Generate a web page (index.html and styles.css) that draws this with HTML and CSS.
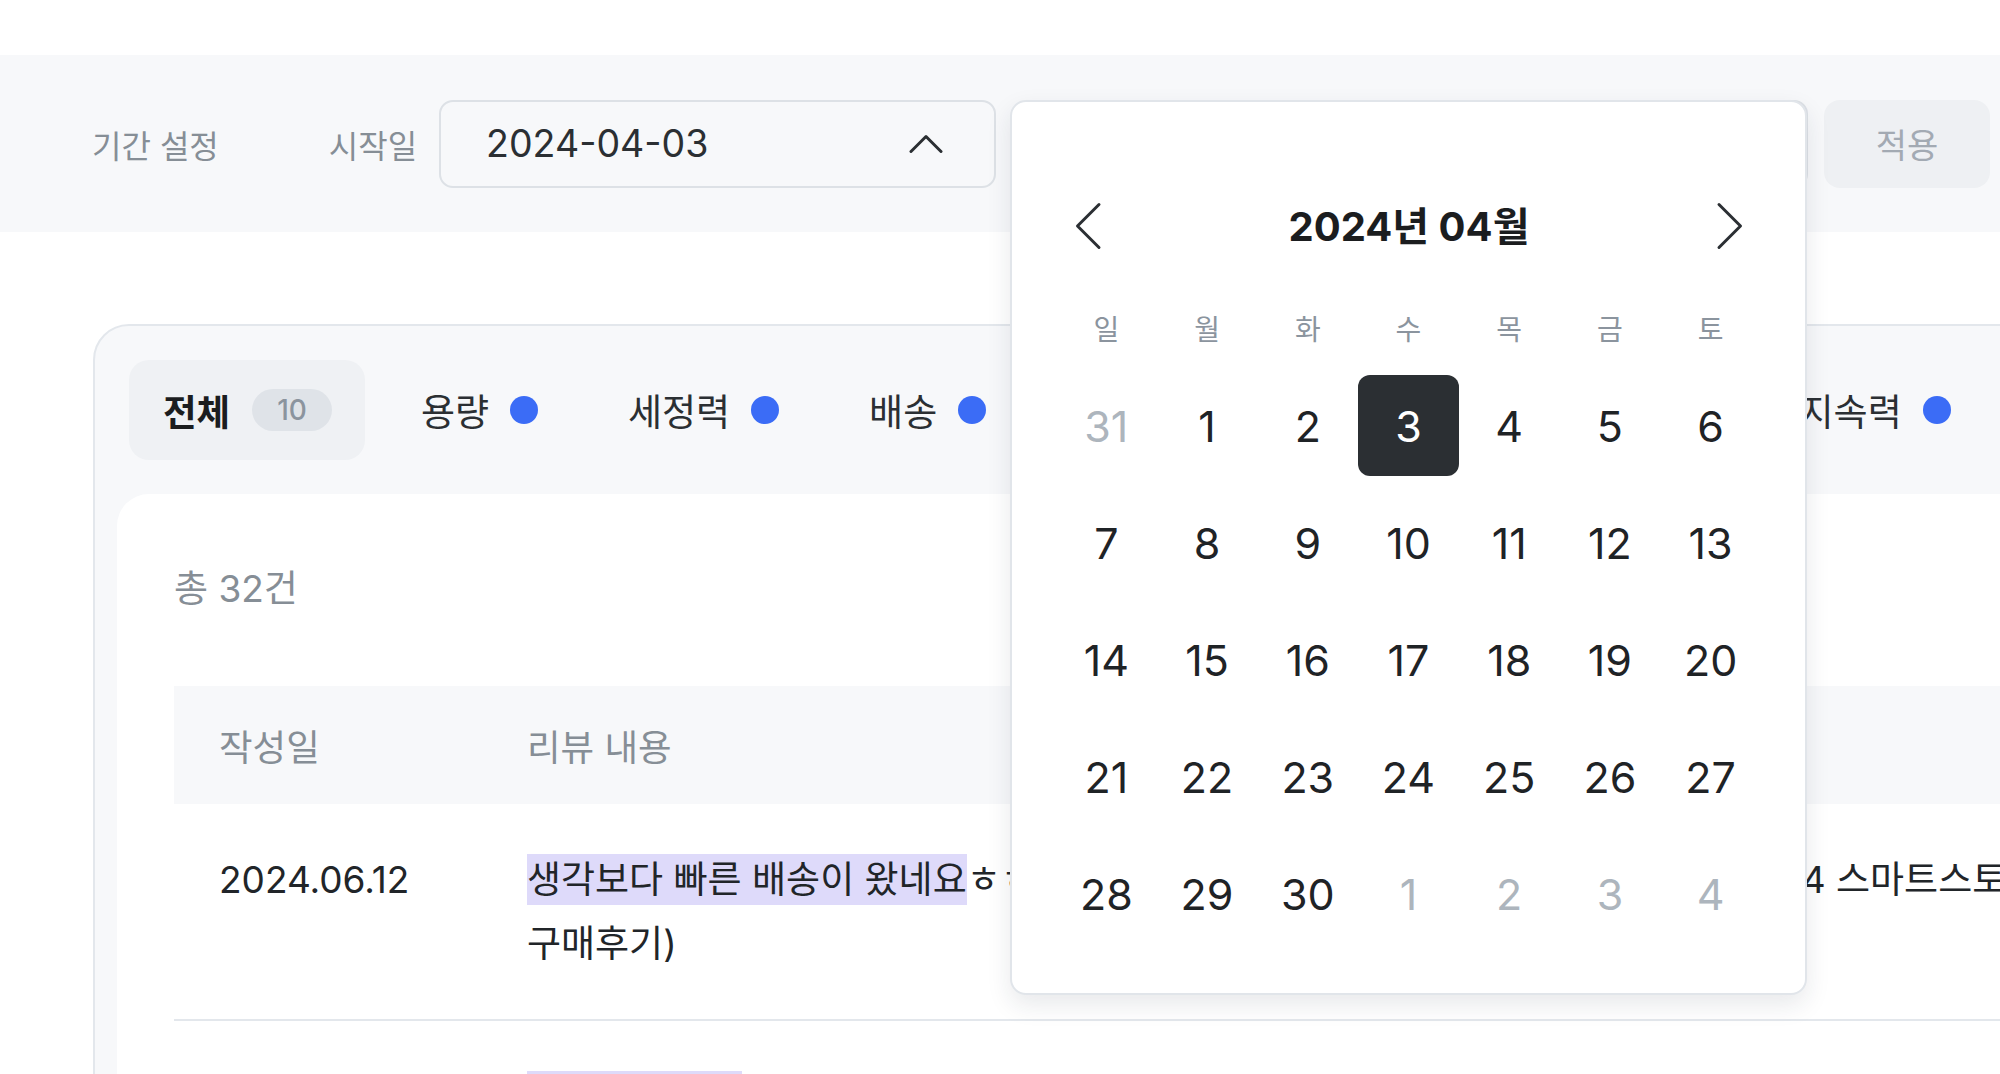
FILE: index.html
```html
<!DOCTYPE html>
<html lang="ko">
<head>
<meta charset="utf-8">
<title>리뷰 분석</title>
<link rel="stylesheet" href="styles.css">
</head>
<body>
<div class="page">
  <section class="filter">
    <span class="filter-title">기간 설정</span>
    <div class="field">
      <span class="field-label">시작일</span>
      <div class="date-input">
        <span class="date-value">2024-04-03</span>
        <svg class="chev-up" width="34" height="19" viewBox="0 0 34 19"><path d="M2 17.5 L17 2.5 L32 17.5" fill="none" stroke="#2b2f33" stroke-width="3" stroke-linecap="round" stroke-linejoin="round"/></svg>
      </div>
    </div>
    <div class="field field-end">
      <span class="field-label">종료일</span>
      <div class="date-input">
        <span class="date-value">2024-06-30</span>
        <svg class="chev-up" width="34" height="19" viewBox="0 0 34 19"><path d="M2 2.5 L17 17.5 L32 2.5" fill="none" stroke="#2b2f33" stroke-width="3" stroke-linecap="round" stroke-linejoin="round"/></svg>
      </div>
    </div>
    <button class="apply" type="button">적용</button>

    <div class="calendar">
      <div class="cal-head">
        <svg width="28" height="48" viewBox="0 0 28 48"><path d="M25 2.5 L3.5 24 L25 45.5" fill="none" stroke="#2b2f33" stroke-width="3" stroke-linecap="round" stroke-linejoin="round"/></svg>
        <span class="cal-title">2024년 04월</span>
        <svg width="28" height="48" viewBox="0 0 28 48"><path d="M3 2.5 L24.5 24 L3 45.5" fill="none" stroke="#2b2f33" stroke-width="3" stroke-linecap="round" stroke-linejoin="round"/></svg>
      </div>
      <div class="cal-week">
        <span>일</span><span>월</span><span>화</span><span>수</span><span>목</span><span>금</span><span>토</span>
      </div>
      <div class="cal-days">
        <span class="day muted">31</span><span class="day">1</span><span class="day">2</span><span class="day selected">3</span><span class="day">4</span><span class="day">5</span><span class="day">6</span>
        <span class="day">7</span><span class="day">8</span><span class="day">9</span><span class="day">10</span><span class="day">11</span><span class="day">12</span><span class="day">13</span>
        <span class="day">14</span><span class="day">15</span><span class="day">16</span><span class="day">17</span><span class="day">18</span><span class="day">19</span><span class="day">20</span>
        <span class="day">21</span><span class="day">22</span><span class="day">23</span><span class="day">24</span><span class="day">25</span><span class="day">26</span><span class="day">27</span>
        <span class="day">28</span><span class="day">29</span><span class="day">30</span><span class="day muted">1</span><span class="day muted">2</span><span class="day muted">3</span><span class="day muted">4</span>
      </div>
    </div>
  </section>

  <section class="card">
    <div class="tabs">
      <div class="tab active"><span>전체</span><span class="badge">10</span></div>
      <div class="tab"><span>용량</span><span class="dot"></span></div>
      <div class="tab"><span>세정력</span><span class="dot"></span></div>
      <div class="tab"><span>배송</span><span class="dot"></span></div>
      <div class="tab"><span>가성비</span><span class="dot"></span></div>
      <div class="tab"><span>사용감</span><span class="dot"></span></div>
      <div class="tab"><span>거품력</span><span class="dot"></span></div>
      <div class="tab"><span>지속력</span><span class="dot"></span></div>
      <div class="tab"><span>향</span><span class="dot"></span></div>
    </div>
    <div class="panel">
      <p class="total">총 32건</p>
      <table class="reviews">
        <colgroup><col class="col-date"><col class="col-text"><col class="col-rest"></colgroup>
        <thead>
          <tr><th>작성일</th><th>리뷰 내용</th><th>평점</th></tr>
        </thead>
        <tbody>
          <tr>
            <td>2024.06.12</td>
            <td><mark>생각보다 빠른 배송이 왔네요</mark>ㅎㅎ 세정력 좋고 향도 은은해서 재구매의사 있음 (2024 스마트스토어 구매후기)</td>
            <td>5.0</td>
          </tr>
          <tr>
            <td>2024.06.11</td>
            <td><mark>배송이 빨라요</mark> 포장도 꼼꼼하게 잘 되어 있었어요</td>
            <td>4.0</td>
          </tr>
        </tbody>
      </table>
    </div>
  </section>
</div>
</body>
</html>
```

FILE: styles.css
```css
* {
  box-sizing: border-box;
}

html,
body {
  margin: 0;
  padding: 0;
}

body {
  width: 2000px;
  height: 1074px;
  overflow: hidden;
  background: #ffffff;
  font-family: Inter, "Noto Sans CJK KR", sans-serif;
  color: #212529;
}

.page {
  width: 2000px;
  padding-top: 55px;
}

/* ---------- filter band ---------- */
.filter {
  position: relative;
  height: 177px;
  background: #f7f8fa;
  display: flex;
  align-items: center;
  padding: 0 10px 0 92px;
}

.filter-title {
  font-size: 32px;
  color: #868e96;
  margin-right: 110px;
  white-space: nowrap;
}

.field {
  display: flex;
  align-items: center;
  gap: 22px;
}

.field-label {
  font-size: 32px;
  color: #868e96;
  white-space: nowrap;
}

.date-input {
  width: 557px;
  height: 88px;
  border: 2px solid #dde1e6;
  border-radius: 14px;
  display: flex;
  align-items: center;
  justify-content: space-between;
  padding: 0 51px 0 45px;
  font-size: 37.5px;
  color: #2b2f33;
}

.field-end {
  margin-left: 48px;
  flex: 1;
}

.field-end .date-input {
  flex: 1;
  width: auto;
}

.apply {
  margin-left: 16px;
  width: 166px;
  height: 88px;
  border: 0;
  border-radius: 16px;
  background: #eef0f3;
  color: #a3aab3;
  font-family: Inter, "Noto Sans CJK KR", sans-serif;
  font-size: 34px;
}

/* ---------- calendar popup ---------- */
.calendar {
  position: absolute;
  left: 1010px;
  top: 45px;
  width: 797px;
  border: 2px solid #e1e5ea;
  border-radius: 16px;
  background: #ffffff;
  padding: 94px 44px 49px;
  box-shadow: 0 10px 24px rgba(30, 40, 60, 0.10);
  z-index: 5;
}

.cal-head {
  height: 60px;
  display: flex;
  align-items: center;
  justify-content: space-between;
  padding: 0 17px 0 18px;
}

.cal-title {
  font-size: 40px;
  font-weight: 700;
  color: #1b1d1f;
  margin-top: -5px;
}

.cal-week {
  margin-top: 54px;
  height: 40px;
  display: grid;
  grid-template-columns: repeat(7, 1fr);
  align-items: center;
  text-align: center;
  font-size: 28px;
  line-height: 40px;
  color: #8b949e;
}

.cal-days {
  margin-top: 25px;
  display: grid;
  grid-template-columns: repeat(7, 1fr);
  row-gap: 16px;
}

.day {
  height: 101px;
  display: flex;
  align-items: center;
  justify-content: center;
  font-size: 43px;
  color: #1f2326;
  border-radius: 12px;
}

.day.muted {
  color: #adb5bd;
}

.day.selected {
  background: #2b2f33;
  color: #ffffff;
}

/* ---------- card ---------- */
.card {
  margin: 92px 0 0 93px;
  width: 2300px;
  height: 900px;
  background: #f7f8fa;
  border: 2px solid #e3e7ec;
  border-radius: 36px;
  padding: 34px 0 0 22px;
}

.tabs {
  display: flex;
  gap: 22px;
  margin-left: 12px;
  height: 100px;
}

.tab {
  display: flex;
  align-items: center;
  gap: 21px;
  padding: 0 34px;
  border-radius: 20px;
  font-size: 37px;
  color: #2b2f33;
  white-space: nowrap;
}

.tab.active {
  background: #eff1f4;
  font-weight: 700;
  font-size: 36.5px;
  color: #1b1d1f;
  gap: 22px;
  padding-right: 33px;
}

.badge {
  height: 42px;
  padding: 0 25px;
  border-radius: 21px;
  background: #dfe3e8;
  font-size: 28px;
  font-weight: 500;
  color: #8b949e;
  display: flex;
  align-items: center;
}

.dot {
  width: 28px;
  height: 28px;
  border-radius: 50%;
  background: #3b6cf6;
}

.panel {
  margin-top: 34px;
  height: 700px;
  background: #ffffff;
  border-radius: 32px 0 0 0;
  padding: 70px 0 0 57px;
}

.total {
  margin: 0;
  font-size: 37px;
  line-height: 50px;
  color: #868e96;
}

.reviews {
  margin-top: 72px;
  width: 2400px;
  border-collapse: collapse;
  table-layout: fixed;
}

.col-date {
  width: 353px;
}

.col-text {
  width: 1573px;
}

.reviews th {
  height: 118px;
  padding: 0;
  background: #f7f8fa;
  text-align: left;
  font-size: 36.5px;
  font-weight: 400;
  color: #868e96;
}

.reviews td {
  padding: 44px 0 43px;
  vertical-align: top;
  font-size: 37px;
  line-height: 64px;
  color: #212529;
  border-bottom: 2px solid #e3e7ec;
  word-break: keep-all;
}

.reviews th:first-child,
.reviews td:first-child {
  padding-left: 45px;
}

.reviews mark {
  background: #dedafa;
  color: inherit;
  padding: 3px 0;
}
```
